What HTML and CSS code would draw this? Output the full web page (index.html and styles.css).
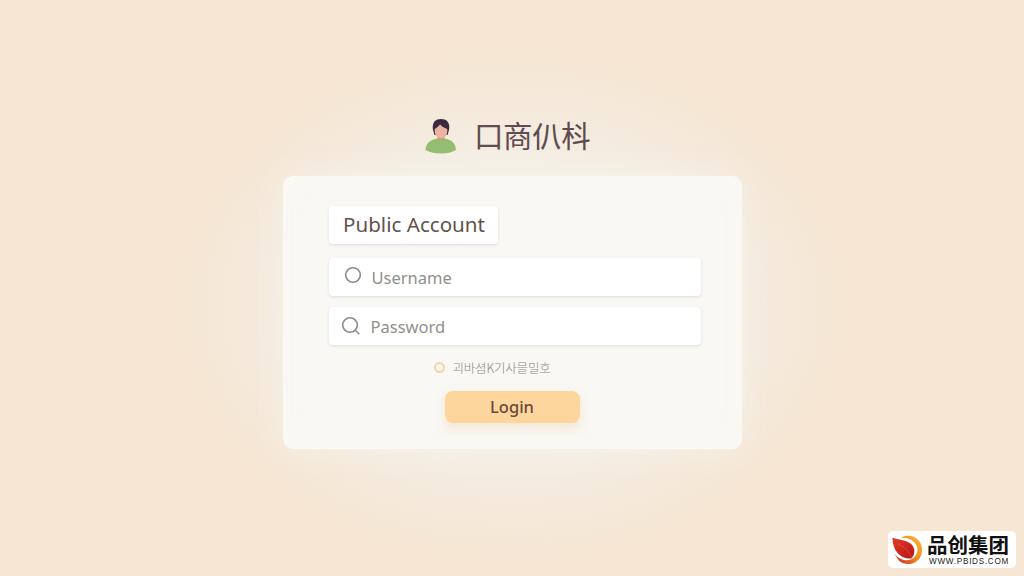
FILE: index.html
```html
<!DOCTYPE html>
<html lang="zh">
<head>
<meta charset="utf-8">
<title>Login</title>
<link rel="stylesheet" href="styles.css">
</head>
<body>
<main class="page">
  <header class="brand">
    <svg class="avatar" viewBox="0 0 32 36">
      <path d="M12.500 19h7v7h-7z" fill="#d98f80"/>
      <path d="M.5 32C1 25 5 22 12 20.500Q16 24 20 20.500C27 22 30.500 25 31 32Q25 35.500 16 35.500T.5 32Z" fill="#94bd72"/>
      <path d="M8 12C6.500 4 11 1 16 1s9.500 3 8 11l-1.500 5h-13Z" fill="#3c2944"/>
      <path d="M9.800 11Q13 9 15 6.500 18 10 22.200 11c.8 5-2 9.500-6.200 9.500S9 16 9.800 11Z" fill="#e9b5a0"/>
    </svg>
    <h1 class="title">口商仈枓</h1>
  </header>
  <form class="card">
    <div class="tab">Public Account</div>
    <label class="field">
      <svg class="icon icon-user" viewBox="0 0 20 20"><circle cx="10" cy="10" r="7.300"/></svg>
      <input class="input" type="text" placeholder="Username">
    </label>
    <label class="field">
      <svg class="icon icon-search" viewBox="0 0 20 20"><circle cx="9" cy="9" r="7.300"/><path d="m14.300 14.300 4 4"/></svg>
      <input class="input" type="text" placeholder="Password">
    </label>
    <div class="remember"><span class="radio"></span><span class="remember-text">괴바셤K기사믈밀호</span></div>
    <button class="login" type="button">Login</button>
  </form>
</main>
<aside class="watermark">
  <svg class="mark" viewBox="0 0 34 34">
    <defs>
      <linearGradient id="ring" x1="1" y1="0" x2="0" y2="1"><stop offset="0" stop-color="#f9bd32"/><stop offset=".5" stop-color="#f08a25"/><stop offset="1" stop-color="#c5221f"/></linearGradient>
      <linearGradient id="leaf" x1="0" y1="0" x2="1" y2="1"><stop offset="0" stop-color="#e53a24"/><stop offset="1" stop-color="#b5161b"/></linearGradient>
    </defs>
    <path d="M10 4C20-2 33 5 32.500 17.500C32 31 17 36 8 28.500L3 21C10 29 19 30 24.500 24.500C32 16 25 3 10 4Z" fill="url(#ring)"/>
    <path d="M1 4C11 7 22 7 24 16c1 5-1 8-3 10C11 27 1 19 1 4Z" fill="url(#leaf)"/>
    <path d="M7 11Q18 15 21.500 26" fill="none" stroke="#d9552c" stroke-width=".8"/>
  </svg>
  <div class="company">
    <span class="company-name">品创集团</span>
    <span class="company-url">WWW.PBIDS.COM</span>
  </div>
</aside>
</body>
</html>
```
FILE: styles.css
```css
* { box-sizing: border-box; }

body {
  margin: 0;
  height: 576px;
  overflow: hidden;
  background: #f6e6d3;
  font-family: "Noto Sans", "Noto Sans CJK SC", sans-serif;
}

.page {
  height: 576px;
  padding: 114px 0 0 283px;
  background: radial-gradient(ellipse 335px 255px at 512px 306px, #f4f0e7 0%, #f4efe5 55%, #f4eadc 78%, #f6e6d3 100%);
}

.brand {
  display: flex;
  align-items: center;
  gap: 17px;
  height: 40px;
  padding-left: 142px;
}

.avatar { width: 32px; height: 36px; margin-top: 4px; }

.title {
  margin: 0;
  color: #604b50;
  font-family: "Noto Sans CJK SC", sans-serif;
  font-size: 29.500px;
  font-weight: 400;
  line-height: 40px;
  letter-spacing: -.5px;
}

.card {
  display: flex;
  flex-direction: column;
  align-items: flex-start;
  width: 459px;
  height: 273px;
  margin-top: 22px;
  padding: 30px 41px 0 45.500px;
  border-radius: 10px;
  background: #f9f8f5;
  box-shadow: 0 0 34px rgba(247, 245, 238, .65), inset 0 0 28px rgba(252, 249, 240, .8);
}

.tab {
  height: 38px;
  width: 169px;
  padding-left: 14.500px;
  border-radius: 4px;
  background: #fff;
  box-shadow: 0 1px 3px rgba(90, 80, 65, .16);
  color: #62534c;
  font-size: 20.600px;
  line-height: 37px;
  white-space: nowrap;
}

.field {
  display: flex;
  align-items: center;
  width: 372px;
  height: 38px;
  margin-top: 14px;
  padding-left: 13px;
  border-radius: 4px;
  background: #fff;
  box-shadow: 0 1px 3px rgba(90, 80, 65, .16);
}

.field + .field { margin-top: 11px; }

.icon {
  width: 20px;
  height: 20px;
  fill: none;
  stroke: #8d8c89;
  stroke-width: 1.600;
}

.icon-user { margin-left: 1px; margin-top: -4px; }
.icon-search { margin-left: -1px; margin-top: -1px; }

.input {
  width: 300px;
  margin-left: 9px;
  padding: 1px 0 0;
  border: 0;
  outline: 0;
  background: none;
  font: 16.500px "Noto Sans", sans-serif;
}

.icon-search + .input { margin-left: 10px; }
.input::placeholder { color: #91908b; opacity: 1; }

.remember {
  display: flex;
  align-items: center;
  gap: 8px;
  height: 20px;
  margin: 12px 0 0 105px;
}

.radio {
  width: 11px;
  height: 11px;
  border: 2px solid #f5d4aa;
  border-radius: 50%;
}

.remember-text {
  color: #8b8983;
  font: 300 12.500px "Noto Sans CJK KR", sans-serif;
  letter-spacing: -.2px;
  white-space: nowrap;
}

.login {
  width: 135px;
  height: 32px;
  margin: 14px 0 0 116px;
  padding: 0;
  border: 0;
  border-radius: 8px;
  background: #fdd69d;
  box-shadow: 0 5px 12px rgba(236, 190, 135, .32);
  color: #6a493b;
  font: 500 16.500px/32px "Noto Sans", sans-serif;
}

.watermark {
  position: absolute;
  left: 888px;
  top: 531px;
  display: flex;
  gap: 3px;
  width: 128px;
  height: 37px;
  padding: 3px 0 0 3px;
  border-radius: 5px;
  background: #fff;
}

.mark { width: 33px; height: 32px; }
.company { display: flex; flex-direction: column; }

.company-name {
  margin-top: -1px;
  color: #111;
  font: 700 20.500px/23px "Noto Sans CJK SC", sans-serif;
}

.company-url {
  margin-top: 1px;
  padding-left: 2px;
  color: #222;
  font: 8.200px/9px "Liberation Sans", sans-serif;
  letter-spacing: .7px;
}
```
